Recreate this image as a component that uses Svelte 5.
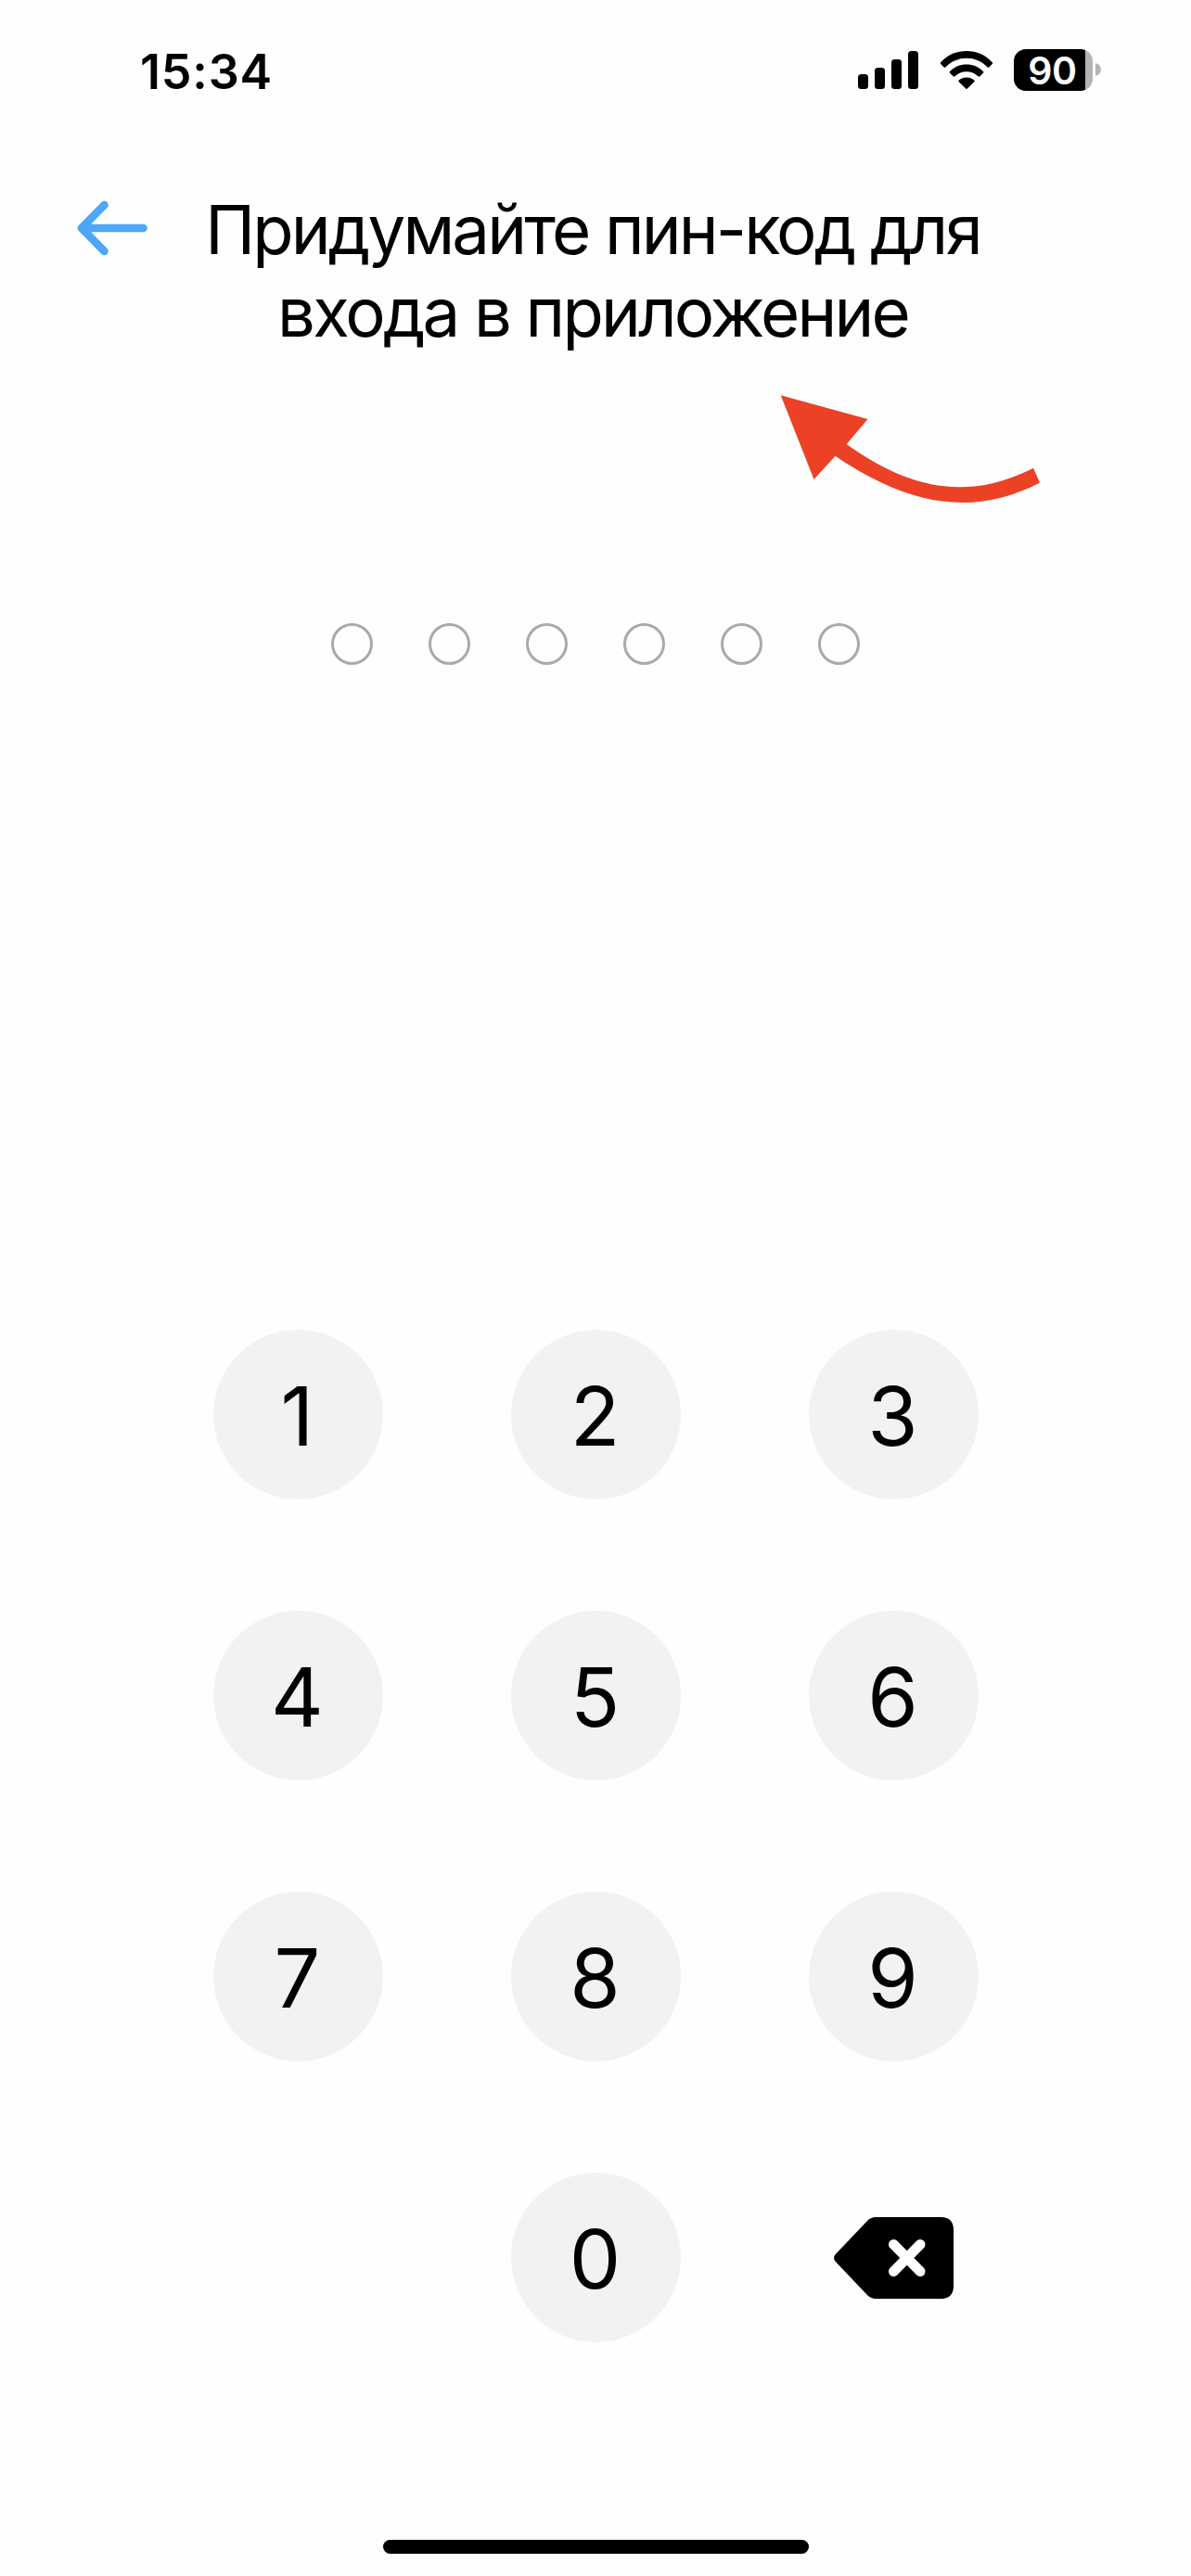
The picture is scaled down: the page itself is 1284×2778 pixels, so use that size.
<script>
  import { createEventDispatcher } from 'svelte';

  export let pinLength = 6;
  export let time = '15:34';
  export let battery = 90;

  const dispatch = createEventDispatcher();
  const digits = ['1', '2', '3', '4', '5', '6', '7', '8', '9'];
  const signalBars = [16, 23, 32, 41];

  let pin = '';

  function addDigit(digit) {
    if (pin.length >= pinLength) return;
    pin += digit;
    if (pin.length === pinLength) {
      dispatch('complete', pin);
    }
  }

  function removeDigit() {
    pin = pin.slice(0, -1);
  }
</script>

<div class="screen">
  <div class="status-bar">
    <span class="time">{time}</span>
    <div class="indicators">
      <div class="signal">
        {#each signalBars as height}
          <span style="height: {height}px"></span>
        {/each}
      </div>
      <svg class="wifi" width="58" height="43" viewBox="0 0 58 43">
        <path d="M1.2 13.2C8.5 5.2 18 1 29 1s20.500 4.200 27.800 12.200q.8.900 0 1.800l-3.400 3.400q-.9.900-1.800 0C45.500 12 37.500 8.700 29 8.700S12.500 12 6.400 18.400q-.9.900-1.800 0L1.200 15q-.8-.9 0-1.800z" />
        <path d="M11 23c5-5.200 11-7.600 18-7.600S42 17.800 47 23q.8.900 0 1.800l-3.600 3.500q-.9.800-1.800 0C38 25 34 23.200 29 23.200S20 25 16.400 28.300q-.9.800-1.800 0L11 24.800q-.8-.9 0-1.800z" />
        <path d="M20.700 32.500c2.300-2 5.200-3 8.300-3s6 1 8.300 3q.8.800 0 1.700l-7.400 7.400q-.9.900-1.800 0l-7.400-7.400q-.8-.9 0-1.700z" />
      </svg>
      <div class="battery">
        <div class="battery-body">{battery}</div>
        <svg width="6" height="14" viewBox="0 0 6 14">
          <path d="M0 0q6 2 6 7t-6 7z" fill="#b3b3b3" />
        </svg>
      </div>
    </div>
  </div>

  <header>
    <button class="back" aria-label="Назад" on:click={() => dispatch('back')}>
      <svg width="76" height="62" viewBox="0 0 76 62">
        <path d="M71.500 31H6M29.500 6L5 31l24.500 25" fill="none" stroke="#4da6f7" stroke-width="8.600" stroke-linecap="round" stroke-linejoin="round" />
      </svg>
    </button>
    <h1>Придумайте пин-код для<br />входа в приложение</h1>
  </header>

  <svg class="pointer" width="282" height="118" viewBox="0 0 282 118">
    <path d="M1.700 1.300L95.500 27 72.700 54C142 104 206 115 274 79.700l7 15.800C206 135 134 117 60.500 66.700L37.500 92z" fill="#ec4125" />
  </svg>

  <div class="dots">
    {#each Array(pinLength) as _, i}
      <span class="dot" class:filled={i < pin.length}></span>
    {/each}
  </div>

  <div class="keypad">
    {#each digits as digit}
      <button class="key" on:click={() => addDigit(digit)}>{digit}</button>
    {/each}
    <button class="key zero" on:click={() => addDigit('0')}>0</button>
    <button class="backspace" aria-label="Удалить" on:click={removeDigit}>
      <svg width="129" height="88" viewBox="0 0 129 88">
        <path d="M45 0h70q14 0 14 14v60q0 14-14 14H45q-5 0-9-4L1.800 48q-3.600-4 0-8L36 4q4-4 9-4z" />
        <path d="M64.500 29.500l28.500 29M93 29.500l-28.500 29" fill="none" stroke="#fff" stroke-width="11" stroke-linecap="round" />
      </svg>
    </button>
  </div>

  <div class="home-indicator"></div>
</div>

<style>
  :global(body) {
    background: #fefefe;
  }
  .screen {
    box-sizing: border-box;
    width: 1284px;
    height: 2778px;
    display: flex;
    flex-direction: column;
    align-items: center;
    background: #fefefe;
    color: #000;
    font-family: Inter, 'Liberation Sans', sans-serif;
  }
  button {
    padding: 0;
    border: 0;
    background: none;
    color: inherit;
    font: inherit;
    cursor: pointer;
  }
  svg {
    display: block;
  }

  .status-bar {
    box-sizing: border-box;
    width: 100%;
    height: 150px;
    padding: 0 97px 0 151px;
    display: flex;
    align-items: center;
    justify-content: space-between;
  }
  .time {
    font-size: 52px;
    font-weight: 600;
    line-height: 60px;
    letter-spacing: 0.8px;
    margin-top: 5px;
  }
  .indicators {
    display: flex;
    align-items: center;
  }
  .signal {
    display: flex;
    align-items: flex-end;
    gap: 7px;
    height: 41px;
    margin-right: 23px;
  }
  .signal span {
    width: 11px;
    border-radius: 3.5px;
    background: #000;
  }
  .wifi {
    margin-right: 22px;
  }
  .battery {
    display: flex;
    align-items: center;
    gap: 3px;
  }
  .battery-body {
    box-sizing: border-box;
    width: 85px;
    height: 45px;
    padding-right: 2px;
    border-radius: 13px;
    background: linear-gradient(to right, #000 77px, #b3b3b3 77px);
    color: #fff;
    font-size: 41px;
    font-weight: 600;
    line-height: 46px;
    letter-spacing: -0.5px;
    text-align: center;
  }

  header {
    box-sizing: border-box;
    width: 100%;
    height: 276px;
    padding: 53px 83px 0;
    display: flex;
    align-items: flex-start;
  }
  .back {
    padding-top: 12px;
  }
  h1 {
    flex: 1;
    margin: 0 82px 0 0;
    font-size: 72.5px;
    font-weight: 400;
    line-height: 89px;
    letter-spacing: -2.85px;
    text-align: center;
    white-space: nowrap;
  }

  .pointer {
    align-self: flex-end;
    margin: -1px 162px 0 0;
  }

  .dots {
    display: flex;
    gap: 60px;
    margin-top: 129px;
  }
  .dot {
    box-sizing: border-box;
    width: 45px;
    height: 45px;
    border: 3px solid #aaa;
    border-radius: 50%;
  }
  .dot.filled {
    border-color: #4da6f7;
    background: #4da6f7;
  }

  .keypad {
    display: grid;
    grid-template-columns: repeat(3, 183px);
    grid-auto-rows: 183px;
    gap: 120px 138px;
    margin-top: 717px;
  }
  .key {
    box-sizing: border-box;
    padding: 3px 1px 0 0;
    border-radius: 50%;
    background: #f2f2f2;
    font-size: 88px;
    line-height: 180px;
    text-align: center;
  }
  .zero {
    grid-column: 2;
  }
  .backspace {
    display: flex;
    align-items: center;
    justify-content: center;
  }

  .home-indicator {
    width: 459px;
    height: 15px;
    margin-top: auto;
    margin-bottom: 24px;
    border-radius: 8px;
    background: #000;
  }
</style>
